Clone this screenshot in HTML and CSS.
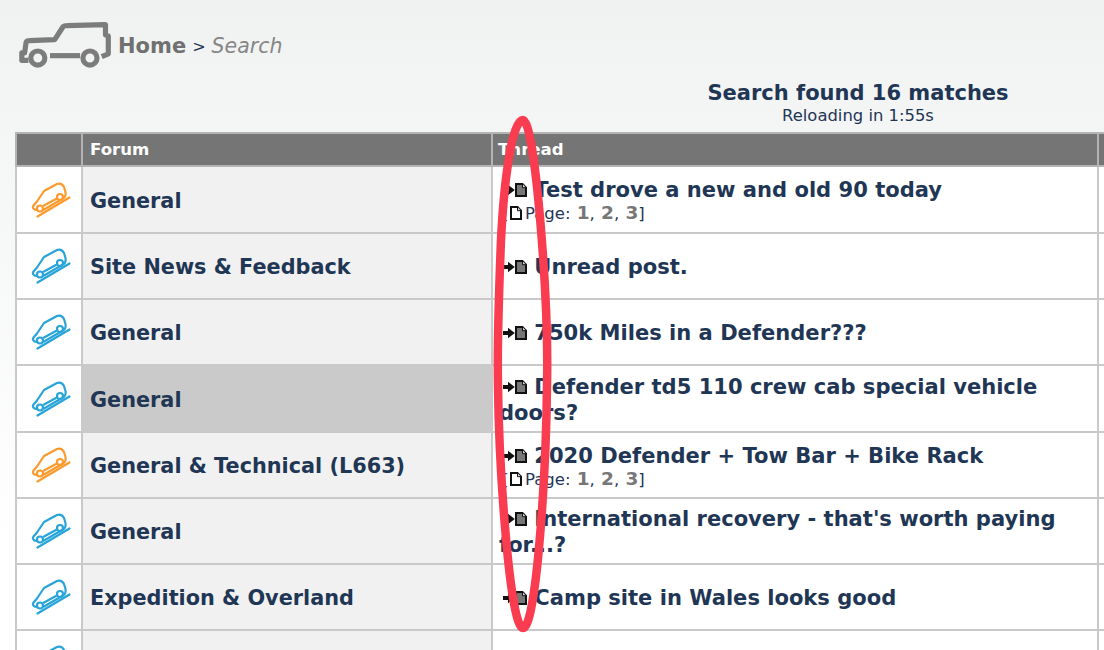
FILE: index.html
```html
<!DOCTYPE html>
<html lang="en">
<head>
<meta charset="utf-8">
<title>Search</title>
<link rel="stylesheet" href="styles.css">
</head>
<body>
<svg class="defs" width="0" height="0" aria-hidden="true">
  <symbol id="slope" viewBox="30 15 40 40">
    <g fill="none" stroke="currentColor" stroke-width="2.200" stroke-linecap="round" stroke-linejoin="round">
      <path d="M36.500 51.500 68.500 32.500"/>
      <path d="M35.500 45C32.500 44.500 31 42.500 32.500 40.500L36 36.500 43 26 56 19C59 18 61.500 19 63 22L64.500 27C65 30 64 32.500 62 33.500L43 44.500"/>
      <path d="M43 40.500 55 34"/>
      <circle cx="39" cy="43.500" r="3"/>
      <circle cx="59" cy="32" r="3"/>
    </g>
  </symbol>
  <symbol id="arrow" viewBox="0 0 12 12">
    <path d="M0 4H5V.8L11.800 6 5 11.200V8H0Z" fill="#111"/>
  </symbol>
  <symbol id="doc" viewBox="0 0 12 14">
    <path d="M1 1H7.500L11 4.700V13H1Z" fill="#777" stroke="#111" stroke-width="2"/>
    <path d="M7.500 1V4.700H11" fill="#ddd" stroke="#111"/>
  </symbol>
  <symbol id="page" viewBox="0 0 12 14">
    <path d="M1 1H7.500L11 4.700V13H1Z" fill="#fff" stroke="#111" stroke-width="2"/>
    <path d="M7.500 1V4.700H11" fill="#ddd" stroke="#111"/>
  </symbol>
</svg>

<header class="crumbs">
  <svg class="logo" viewBox="0 0 100 50" aria-hidden="true">
    <g fill="none" stroke="#7c7c7c" stroke-width="5.500" stroke-linejoin="round">
      <path d="M10 44H3V36H6L7.500 25C8 23 9 23 11 23L38 22 47 8C48 7 49 7 51 7L92 6V17L95 18V37L88 40"/>
      <path d="M33 39H65"/>
      <circle cx="20" cy="41.500" r="7.500"/>
      <circle cx="75.500" cy="41.500" r="7.500"/>
    </g>
  </svg>
  <a class="home" href="#">Home</a>
  <span class="sep">&gt;</span>
  <span class="here">Search</span>
</header>

<section class="result">
  <h1>Search found 16 matches</h1>
  <p>Reloading in 1:55s</p>
</section>

<table class="grid">
  <colgroup><col class="c-icon"><col class="c-forum"><col class="c-thread"><col class="c-rest"></colgroup>
  <thead>
    <tr><th></th><th>Forum</th><th class="th-thread">Thread</th><th></th></tr>
  </thead>
  <tbody>
    <tr class="r-tall">
      <td class="ic orange"><svg class="slope"><use href="#slope"/></svg></td>
      <td class="forum"><a href="#">General</a></td>
      <td class="thread">
        <div class="line"><svg class="arrow"><use href="#arrow"/></svg><svg class="doc"><use href="#doc"/></svg> <a href="#">Test drove a new and old 90 today</a></div>
        <div class="pages">[ <svg class="pg"><use href="#page"/></svg> Page: <b>1</b>, <b>2</b>, <b>3</b>]</div>
      </td>
      <td></td>
    </tr>
    <tr>
      <td class="ic blue"><svg class="slope"><use href="#slope"/></svg></td>
      <td class="forum"><a href="#">Site News &amp; Feedback</a></td>
      <td class="thread"><div class="line"><svg class="arrow"><use href="#arrow"/></svg><svg class="doc"><use href="#doc"/></svg> <a href="#">Unread post.</a></div></td>
      <td></td>
    </tr>
    <tr>
      <td class="ic blue"><svg class="slope"><use href="#slope"/></svg></td>
      <td class="forum"><a href="#">General</a></td>
      <td class="thread"><div class="line"><svg class="arrow"><use href="#arrow"/></svg><svg class="doc"><use href="#doc"/></svg> <a href="#">750k Miles in a Defender???</a></div></td>
      <td></td>
    </tr>
    <tr class="r-tall">
      <td class="ic blue"><svg class="slope"><use href="#slope"/></svg></td>
      <td class="forum active"><a href="#">General</a></td>
      <td class="thread"><div class="line"><svg class="arrow"><use href="#arrow"/></svg><svg class="doc"><use href="#doc"/></svg> <a href="#">Defender td5 110 crew cab special vehicle doors?</a></div></td>
      <td></td>
    </tr>
    <tr>
      <td class="ic orange"><svg class="slope"><use href="#slope"/></svg></td>
      <td class="forum"><a href="#">General &amp; Technical (L663)</a></td>
      <td class="thread">
        <div class="line"><svg class="arrow"><use href="#arrow"/></svg><svg class="doc"><use href="#doc"/></svg> <a href="#">2020 Defender + Tow Bar + Bike Rack</a></div>
        <div class="pages">[ <svg class="pg"><use href="#page"/></svg> Page: <b>1</b>, <b>2</b>, <b>3</b>]</div>
      </td>
      <td></td>
    </tr>
    <tr>
      <td class="ic blue"><svg class="slope"><use href="#slope"/></svg></td>
      <td class="forum"><a href="#">General</a></td>
      <td class="thread"><div class="line"><svg class="arrow"><use href="#arrow"/></svg><svg class="doc"><use href="#doc"/></svg> <a href="#">International recovery - that's worth paying for...?</a></div></td>
      <td></td>
    </tr>
    <tr>
      <td class="ic blue"><svg class="slope"><use href="#slope"/></svg></td>
      <td class="forum"><a href="#">Expedition &amp; Overland</a></td>
      <td class="thread"><div class="line"><svg class="arrow"><use href="#arrow"/></svg><svg class="doc"><use href="#doc"/></svg> <a href="#">Camp site in Wales looks good</a></div></td>
      <td></td>
    </tr>
    <tr>
      <td class="ic blue"><svg class="slope"><use href="#slope"/></svg></td>
      <td class="forum"></td>
      <td class="thread"></td>
      <td></td>
    </tr>
  </tbody>
</table>

<svg class="ring" viewBox="490 110 70 530" aria-hidden="true">
  <path d="M523 120C512 120 504 180 501 240 499 290 497 340 498 385 499 470 510 628 523 628 536 628 546 480 547 385 549 300 535 120 523 120Z" fill="none" stroke="#fa3c50" stroke-width="8.500"/>
</svg>
</body>
</html>
```
FILE: styles.css
```css
* { box-sizing: border-box; }
html { height: 100%; overflow: hidden; }
body {
  margin: 0;
  height: 650px;
  overflow: hidden;
  position: relative;
  font-family: "DejaVu Sans", Verdana, sans-serif;
  color: #1f3655;
  background: linear-gradient(#f0f2f2 0, #f5f6f6 160px, #fff 560px);
}
a { color: inherit; text-decoration: none; }
.defs { position: absolute; }

.crumbs {
  display: flex;
  align-items: center;
  gap: 6px;
  height: 58px;
  padding: 34px 0 0 19px;
  font-size: 20.500px;
}
.logo { width: 94px; height: 47px; margin: -7px -1px 0 0; flex: none; overflow: visible; }
.home { font-weight: 700; font-size: 21px; color: #707070; }
.sep { font-size: 16px; color: #1f3655; }
.here { font-style: italic; color: #868686; }

.result {
  width: 492px;
  margin: 22px 0 0 auto;
  height: 52px;
  text-align: center;
}
.result h1 { margin: 0; font-size: 21px; line-height: 26px; font-weight: 700; }
.result p { margin: 0; font-size: 16.400px; line-height: 19px; }

.grid {
  border-collapse: collapse;
  table-layout: fixed;
  width: 1300px;
  margin-left: 15px;
}
.c-icon { width: 66px; }
.c-forum { width: 410px; }
.c-thread { width: 606px; }
.c-rest { width: 218px; }
.grid th, .grid td { border: 2px solid #c9c9c9; padding: 0; }
.grid th {
  height: 33px;
  background: #757575;
  border-color: #b4b4b4;
  color: #fff;
  text-align: left;
  font-size: 16.600px;
  padding-left: 7px;
}
.grid th.th-thread { padding-left: 5px; }
.grid tbody tr { height: 66px; }
.grid tbody tr.r-tall { height: 67px; }
.grid td { background: #fff; }
.grid td.ic { text-align: center; vertical-align: middle; }
.orange { color: #fb9a2d; }
.blue { color: #28a4d8; }
.slope { width: 40px; height: 40px; display: block; margin: 0 0 0 14px; }
.grid td.forum {
  background: #f1f1f1;
  padding: 2px 0 0 7px;
  font-size: 20.800px;
  font-weight: 700;
}
.grid td.forum.active { background: #cacaca; }
.grid td.thread { padding: 2px 5px 0 6px; }
.line { font-size: 21.050px; line-height: 26px; font-weight: 700; }
.arrow { width: 12px; height: 12px; vertical-align: 1px; margin-left: 4px; }
.doc { width: 12px; height: 14px; vertical-align: 0; }
.pages { font-size: 16.500px; line-height: 20px; padding-left: 3px; }
.pages b { color: #777; font-size: 18.500px; margin-left: 1px; }
.pg { width: 12px; height: 14px; vertical-align: -1px; margin: 0 -2px 0 -4px; }

.ring {
  position: absolute;
  left: 490px;
  top: 110px;
  width: 70px;
  height: 530px;
}
```
